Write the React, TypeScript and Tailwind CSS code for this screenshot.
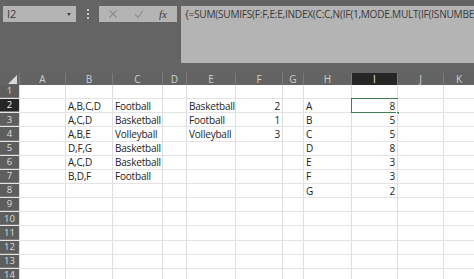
const cols = [
  { key: 'A', w: 46 },
  { key: 'B', w: 47 },
  { key: 'C', w: 50 },
  { key: 'D', w: 24 },
  { key: 'E', w: 49 },
  { key: 'F', w: 47 },
  { key: 'G', w: 21 },
  { key: 'H', w: 48 },
  { key: 'I', w: 46 },
  { key: 'J', w: 46 },
  { key: 'K', w: 31 },
]

const rightAligned = ['F', 'I']

const data: Record<number, Record<string, string>> = {
  2: { B: 'A,B,C,D', C: 'Football', E: 'Basketball', F: '2', H: 'A', I: '8' },
  3: { B: 'A,C,D', C: 'Basketball', E: 'Football', F: '1', H: 'B', I: '5' },
  4: { B: 'A,B,E', C: 'Volleyball', E: 'Volleyball', F: '3', H: 'C', I: '5' },
  5: { B: 'D,F,G', C: 'Basketball', H: 'D', I: '8' },
  6: { B: 'A,C,D', C: 'Basketball', H: 'E', I: '3' },
  7: { B: 'B,D,F', C: 'Football', H: 'F', I: '3' },
  8: { H: 'G', I: '2' },
}

const rows = Array.from({ length: 14 }, (_, i) => i + 1)

const FormulaBar = () => {
  return (
    <div className="flex h-[73px] bg-[#646464] pt-[6px] pl-[3px]">
      <div className="flex h-[16px] w-[73px] items-center justify-between bg-[#b4b4b4] pl-[4px] pr-[5px] text-[11px] text-[#3a3a3a]">
        <span>I2</span>
        <span className="mt-[1px] h-0 w-0 border-x-[2px] border-t-[3px] border-x-transparent border-t-[#444]" />
      </div>
      <div className="flex h-[16px] w-[23px] flex-col items-center justify-center gap-[2px]">
        <span className="h-[2px] w-[2px] bg-[#c8c8c8]" />
        <span className="h-[2px] w-[2px] bg-[#c8c8c8]" />
        <span className="h-[2px] w-[2px] bg-[#c8c8c8]" />
      </div>
      <div className="flex h-[16px] w-[78px] items-center bg-[#b4b4b4]">
        <svg width="10" height="10" viewBox="0 0 10 10" className="ml-[9px]">
          <path d="M1.5 1.5 L8.5 8.5 M8.5 1.5 L1.5 8.5" stroke="#8c8c8c" strokeWidth="1.1" fill="none" />
        </svg>
        <svg width="10" height="10" viewBox="0 0 10 10" className="ml-[16px]">
          <path d="M1 5.5 L4 8.5 L9 1.5" stroke="#8c8c8c" strokeWidth="1.1" fill="none" />
        </svg>
        <span className="ml-[15px] font-['Liberation_Serif',serif] text-[11px] italic text-[#3a3a3a]">fx</span>
      </div>
      <div className="ml-[4px] h-[57px] min-w-0 flex-1 overflow-hidden whitespace-nowrap bg-[#b4b4b4] pl-[4px] pt-[1px] text-[10.1px] tracking-[-0.25px] text-[#3a3a3a]">
        {'{=SUM(SUMIFS(F:F,E:E,INDEX(C:C,N(IF(1,MODE.MULT(IF(ISNUMBER(SEARCH(H2,B:B)),ROW(B:B)*{1,1}))))))}'}
      </div>
    </div>
  )
}

const ColumnHeaders = () => {
  return (
    <div className="flex h-[12px] bg-[#636363]">
      <div className="flex w-[19px] items-end justify-end pr-[2px] pb-[1px]">
        <span className="h-0 w-0 border-b-[9px] border-l-[9px] border-b-[#d9d9d9] border-l-transparent" />
      </div>
      {cols.map(col => (
        <div
          key={col.key}
          style={{ width: col.w }}
          className={`flex shrink-0 items-center justify-center border-l border-[#7a7a7a] text-[10px] leading-none ${col.key === 'I' ? 'bg-[#262626] text-[#e8e8e8]' : 'text-[#cfcfcf]'}`}
        >
          {col.key}
        </div>
      ))}
    </div>
  )
}

const App = () => {
  return (
    <div className="h-[279px] w-[474px] overflow-hidden bg-white font-['Open_Sans',sans-serif]">
      <FormulaBar />
      <ColumnHeaders />
      {rows.map(r => (
        <div key={r} className="flex h-[14.15px] border-b border-[#e4e4e4]">
          <div
            className={`flex w-[19px] shrink-0 items-center justify-center border-b border-[#7a7a7a] text-[9.5px] leading-none ${r === 2 ? 'bg-[#262626] text-[#f0f0f0]' : 'bg-[#5e5e5e] text-[#dcdcdc]'}`}
          >
            {r}
          </div>
          {cols.map(col => {
            const value = data[r]?.[col.key] ?? ''
            const selected = r === 2 && col.key === 'I'
            return (
              <div
                key={col.key}
                style={{ width: col.w }}
                className={`relative flex shrink-0 items-center overflow-visible whitespace-nowrap border-l border-[#dedede] px-[2px] text-[10px] leading-none tracking-[-0.2px] text-[#222] ${rightAligned.includes(col.key) ? 'justify-end' : 'justify-start'}`}
              >
                {value}
                {selected && (
                  <>
                    <span className="absolute -left-[1px] -top-[1px] -bottom-[1px] -right-[1px] border-[1.5px] border-[#3f7f58]" />
                    <span className="absolute -bottom-[3px] -right-[3px] h-[4px] w-[4px] border border-white bg-[#3f7f58]" />
                  </>
                )}
              </div>
            )
          })}
        </div>
      ))}
    </div>
  )
}

export default App
